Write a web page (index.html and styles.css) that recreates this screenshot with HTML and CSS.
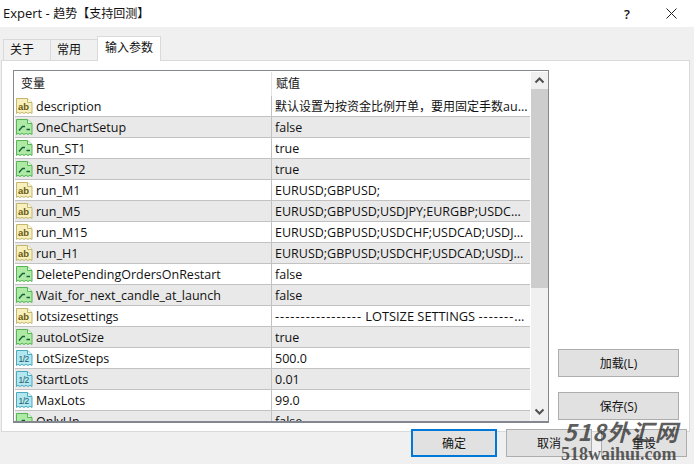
FILE: index.html
```html
<!DOCTYPE html>
<html lang="zh">
<head>
<meta charset="utf-8">
<title>Expert</title>
<link rel="stylesheet" href="styles.css">
</head>
<body>
<svg class="defs" width="0" height="0" aria-hidden="true">
  <symbol id="i-ab" viewBox="0 0 17 17">
    <path d="M.5 .5h11l4.500 4v11l-2-1.200-2 1.200-2-1.200-2 1.200-2-1.200-2 1.200-2-1.200-1.500 1.200z" fill="#f7f0bd" stroke="#c2b670"/>
    <path d="M11.500 .5v4h4.500" fill="#fffbe0" stroke="#c2b670"/>
    <text x="2" y="11.500" class="icon-text ab">ab</text>
  </symbol>
  <symbol id="i-bool" viewBox="0 0 17 17">
    <path d="M.5 .5h11l4.500 4v11l-2-1.200-2 1.200-2-1.200-2 1.200-2-1.200-2 1.200-2-1.200-1.500 1.200z" fill="#aeeaa6" stroke="#56b455"/>
    <path d="M11.500 .5v4h4.500" fill="#e4fbe0" stroke="#56b455"/>
    <path d="M3 11.500l3.500-4h2.500M10.500 10.500h3.500" fill="none" stroke="#14603a" stroke-width="1.300"/>
  </symbol>
  <symbol id="i-num" viewBox="0 0 17 17">
    <path d="M.5 .5h11l4.500 4v11l-2-1.200-2 1.200-2-1.200-2 1.200-2-1.200-2 1.200-2-1.200-1.500 1.200z" fill="#b4e6ef" stroke="#4aa9bd"/>
    <path d="M11.500 .5v4h4.500" fill="#e2f8fb" stroke="#4aa9bd"/>
    <text x="2.500" y="11.500" class="icon-text num">1/2</text>
  </symbol>
</svg>
<div class="dialog">
  <header class="titlebar">
    <span class="title">Expert - <span class="zh">趋势【支持回测】</span></span>
    <span class="help">?</span>
    <svg class="close" width="11" height="11" viewBox="0 0 11 11"><path d="M.5.5l10 10M10.500.5l-10 10" stroke="#222" fill="none"/></svg>
  </header>
  <main class="body">
    <nav class="tabs">
      <span class="tab">关于</span>
      <span class="tab">常用</span>
      <span class="tab active">输入参数</span>
    </nav>
    <section class="panel">
      <div class="table">
        <div class="grid">
          <div class="thead"><span class="th name">变量</span><span class="th val">赋值</span></div>
          <div class="row"><span class="cell name"><svg class="ico"><use href="#i-ab"/></svg>description</span><span class="cell val"><span class="zh">默认设置为按资金比例开单，要用固定手数</span>au...</span></div>
          <div class="row"><span class="cell name"><svg class="ico"><use href="#i-bool"/></svg>OneChartSetup</span><span class="cell val">false</span></div>
          <div class="row"><span class="cell name"><svg class="ico"><use href="#i-bool"/></svg>Run_ST1</span><span class="cell val">true</span></div>
          <div class="row"><span class="cell name"><svg class="ico"><use href="#i-bool"/></svg>Run_ST2</span><span class="cell val">true</span></div>
          <div class="row"><span class="cell name"><svg class="ico"><use href="#i-ab"/></svg>run_M1</span><span class="cell val">EURUSD;GBPUSD;</span></div>
          <div class="row"><span class="cell name"><svg class="ico"><use href="#i-ab"/></svg>run_M5</span><span class="cell val">EURUSD;GBPUSD;USDJPY;EURGBP;USDC...</span></div>
          <div class="row"><span class="cell name"><svg class="ico"><use href="#i-ab"/></svg>run_M15</span><span class="cell val">EURUSD;GBPUSD;USDCHF;USDCAD;USDJ...</span></div>
          <div class="row"><span class="cell name"><svg class="ico"><use href="#i-ab"/></svg>run_H1</span><span class="cell val">EURUSD;GBPUSD;USDCHF;USDCAD;USDJ...</span></div>
          <div class="row"><span class="cell name"><svg class="ico"><use href="#i-bool"/></svg>DeletePendingOrdersOnRestart</span><span class="cell val">false</span></div>
          <div class="row"><span class="cell name"><svg class="ico"><use href="#i-bool"/></svg>Wait_for_next_candle_at_launch</span><span class="cell val">false</span></div>
          <div class="row"><span class="cell name"><svg class="ico"><use href="#i-ab"/></svg>lotsizesettings</span><span class="cell val lots"><span class="dash">-----------------</span>&nbsp;LOTSIZE SETTINGS&nbsp;<span class="dash">-------</span>...</span></div>
          <div class="row"><span class="cell name"><svg class="ico"><use href="#i-bool"/></svg>autoLotSize</span><span class="cell val">true</span></div>
          <div class="row"><span class="cell name"><svg class="ico"><use href="#i-num"/></svg>LotSizeSteps</span><span class="cell val">500.0</span></div>
          <div class="row"><span class="cell name"><svg class="ico"><use href="#i-num"/></svg>StartLots</span><span class="cell val">0.01</span></div>
          <div class="row"><span class="cell name"><svg class="ico"><use href="#i-num"/></svg>MaxLots</span><span class="cell val">99.0</span></div>
          <div class="row"><span class="cell name"><svg class="ico"><use href="#i-bool"/></svg>OnlyUp</span><span class="cell val">false</span></div>
        </div>
        <div class="scrollbar">
          <svg class="arrow" width="17" height="17" viewBox="0 0 17 17"><path d="M4.500 10.500l4-4 4 4" fill="none" stroke="#505050" stroke-width="2"/></svg>
          <div class="thumb"></div>
          <svg class="arrow bottom" width="17" height="17" viewBox="0 0 17 17"><path d="M4.500 6.500l4 4 4-4" fill="none" stroke="#505050" stroke-width="2"/></svg>
        </div>
      </div>
      <div class="side">
        <button class="btn wide">加载(L)</button>
        <button class="btn wide">保存(S)</button>
      </div>
    </section>
    <footer class="actions">
      <button class="btn act primary">确定</button>
      <button class="btn act">取消</button>
      <button class="btn act">重设</button>
    </footer>
  </main>
</div>
<div class="watermark">
  <div class="wm-top">518外汇网</div>
  <div class="wm-bottom">518waihui.com</div>
</div>
</body>
</html>
```
FILE: styles.css
```css
* { box-sizing: border-box; }
html, body { margin: 0; padding: 0; }
body {
  width: 694px; height: 464px; overflow: hidden; position: relative;
  font-family: "Open Sans", "Noto Sans CJK SC", sans-serif;
  font-size: 12.500px; color: #111; background: #f0f0f0;
}
.zh { font-size: 12px; }
.defs { position: absolute; }
.dialog { display: flex; flex-direction: column; height: 464px; }
.titlebar {
  height: 27px; background: #fff; display: flex; align-items: center;
  padding: 0 17px 0 3px; flex: none;
}
.title { flex: 1; line-height: 24px; font-size: 13px; }
.help { margin-right: 36px; font-size: 13px; font-weight: 600; }
.close { display: block; }
.body { flex: 1; padding: 10px 4px 0 1px; display: flex; flex-direction: column; }
.tabs { display: flex; height: 24px; padding-left: 2px; align-items: flex-end; position: relative; z-index: 1; margin-bottom: -1px; flex: none; }
.tab {
  width: 48px; height: 22px; background: #f0f0f0; border: 1px solid #d9d9d9;
  margin-right: -1px; display: flex; align-items: center; padding: 0 0 3px 6px; font-size: 12px;
}
.tab.active { width: 64px; height: 25px; background: #fff; border-bottom: 0; padding: 0 0 4px 7px; }
.panel {
  height: 372px; border: 1px solid #d9d9d9; background: #fff; flex: none;
  padding: 9px 9px 8px 11px; display: flex; gap: 9px;
}
.table {
  width: 536px; height: 353px; border: 1px solid #828790; border-bottom-width: 2px;
  display: flex; padding: 1px 0 0 1px; overflow: hidden; background: #fff; flex: none;
}
.grid { width: 515px; overflow: hidden; flex: none; }
.thead { display: flex; height: 24px; background: #fff; }
.th { display: flex; align-items: center; padding: 0 0 2px 6px; font-size: 12px; }
.th.name { width: 257px; border-right: 1px solid #e3e3e3; }
.th.val { flex: 1; padding-left: 4px; }
.row { display: flex; height: 21px; border-bottom: 1px solid #c2c2c2; background: #fff; }
.row:nth-child(2n+3) { background: #e9e9e9; }
.cell { display: flex; align-items: center; white-space: nowrap; overflow: hidden; }
.cell.name { width: 257px; padding-left: 1px; border-right: 1px solid #c2c2c2; }
.cell.val { flex: 1; padding-left: 3px; }
.dash { letter-spacing: 1px; }
.lots { font-size: 12.800px; }
.ico { width: 17px; height: 17px; margin-right: 3px; flex: none; }
.icon-text { font-family: "Liberation Sans", sans-serif; }
.ab { font-size: 9.500px; fill: #6a5a10; font-weight: 700; }
.num { font-size: 8.500px; fill: #14606e; letter-spacing: -.5px; }
.scrollbar {
  width: 17px; margin-left: 1px; background: #f0f0f0; position: relative; display: flex; flex-direction: column; flex: none;
}
.arrow { display: block; flex: none; }
.thumb { height: 199px; background: #cdcdcd; flex: none; }
.arrow.bottom { margin-top: auto; margin-bottom: 1px; }
.side { width: 121px; flex: none; display: flex; flex-direction: column; gap: 15px; padding-top: 279px; }
.btn {
  font: inherit; font-size: 12px; color: #111; background: #e1e1e1; border: 1px solid #adadad; padding: 0;
}
.btn.wide { height: 28px; width: 121px; }
.actions { display: flex; justify-content: flex-end; gap: 9px; margin-top: -3px; padding-right: 3px; position: relative; }
.btn.act { width: 86px; height: 28px; }
.btn.primary { border: 2px solid #0078d7; }
.watermark {
  position: absolute; left: 563px; top: 417px; width: 131px; pointer-events: none;
  color: rgba(50, 50, 50, .78);
}
.wm-top { font-family: "Noto Sans CJK SC", sans-serif; font-style: italic; font-weight: 700; font-size: 23px; line-height: 28px; letter-spacing: 1px; white-space: nowrap; }
.wm-bottom { font-family: "Liberation Serif", serif; font-weight: 700; font-size: 18px; line-height: 18px; margin-left: -2px; white-space: nowrap; }
```
